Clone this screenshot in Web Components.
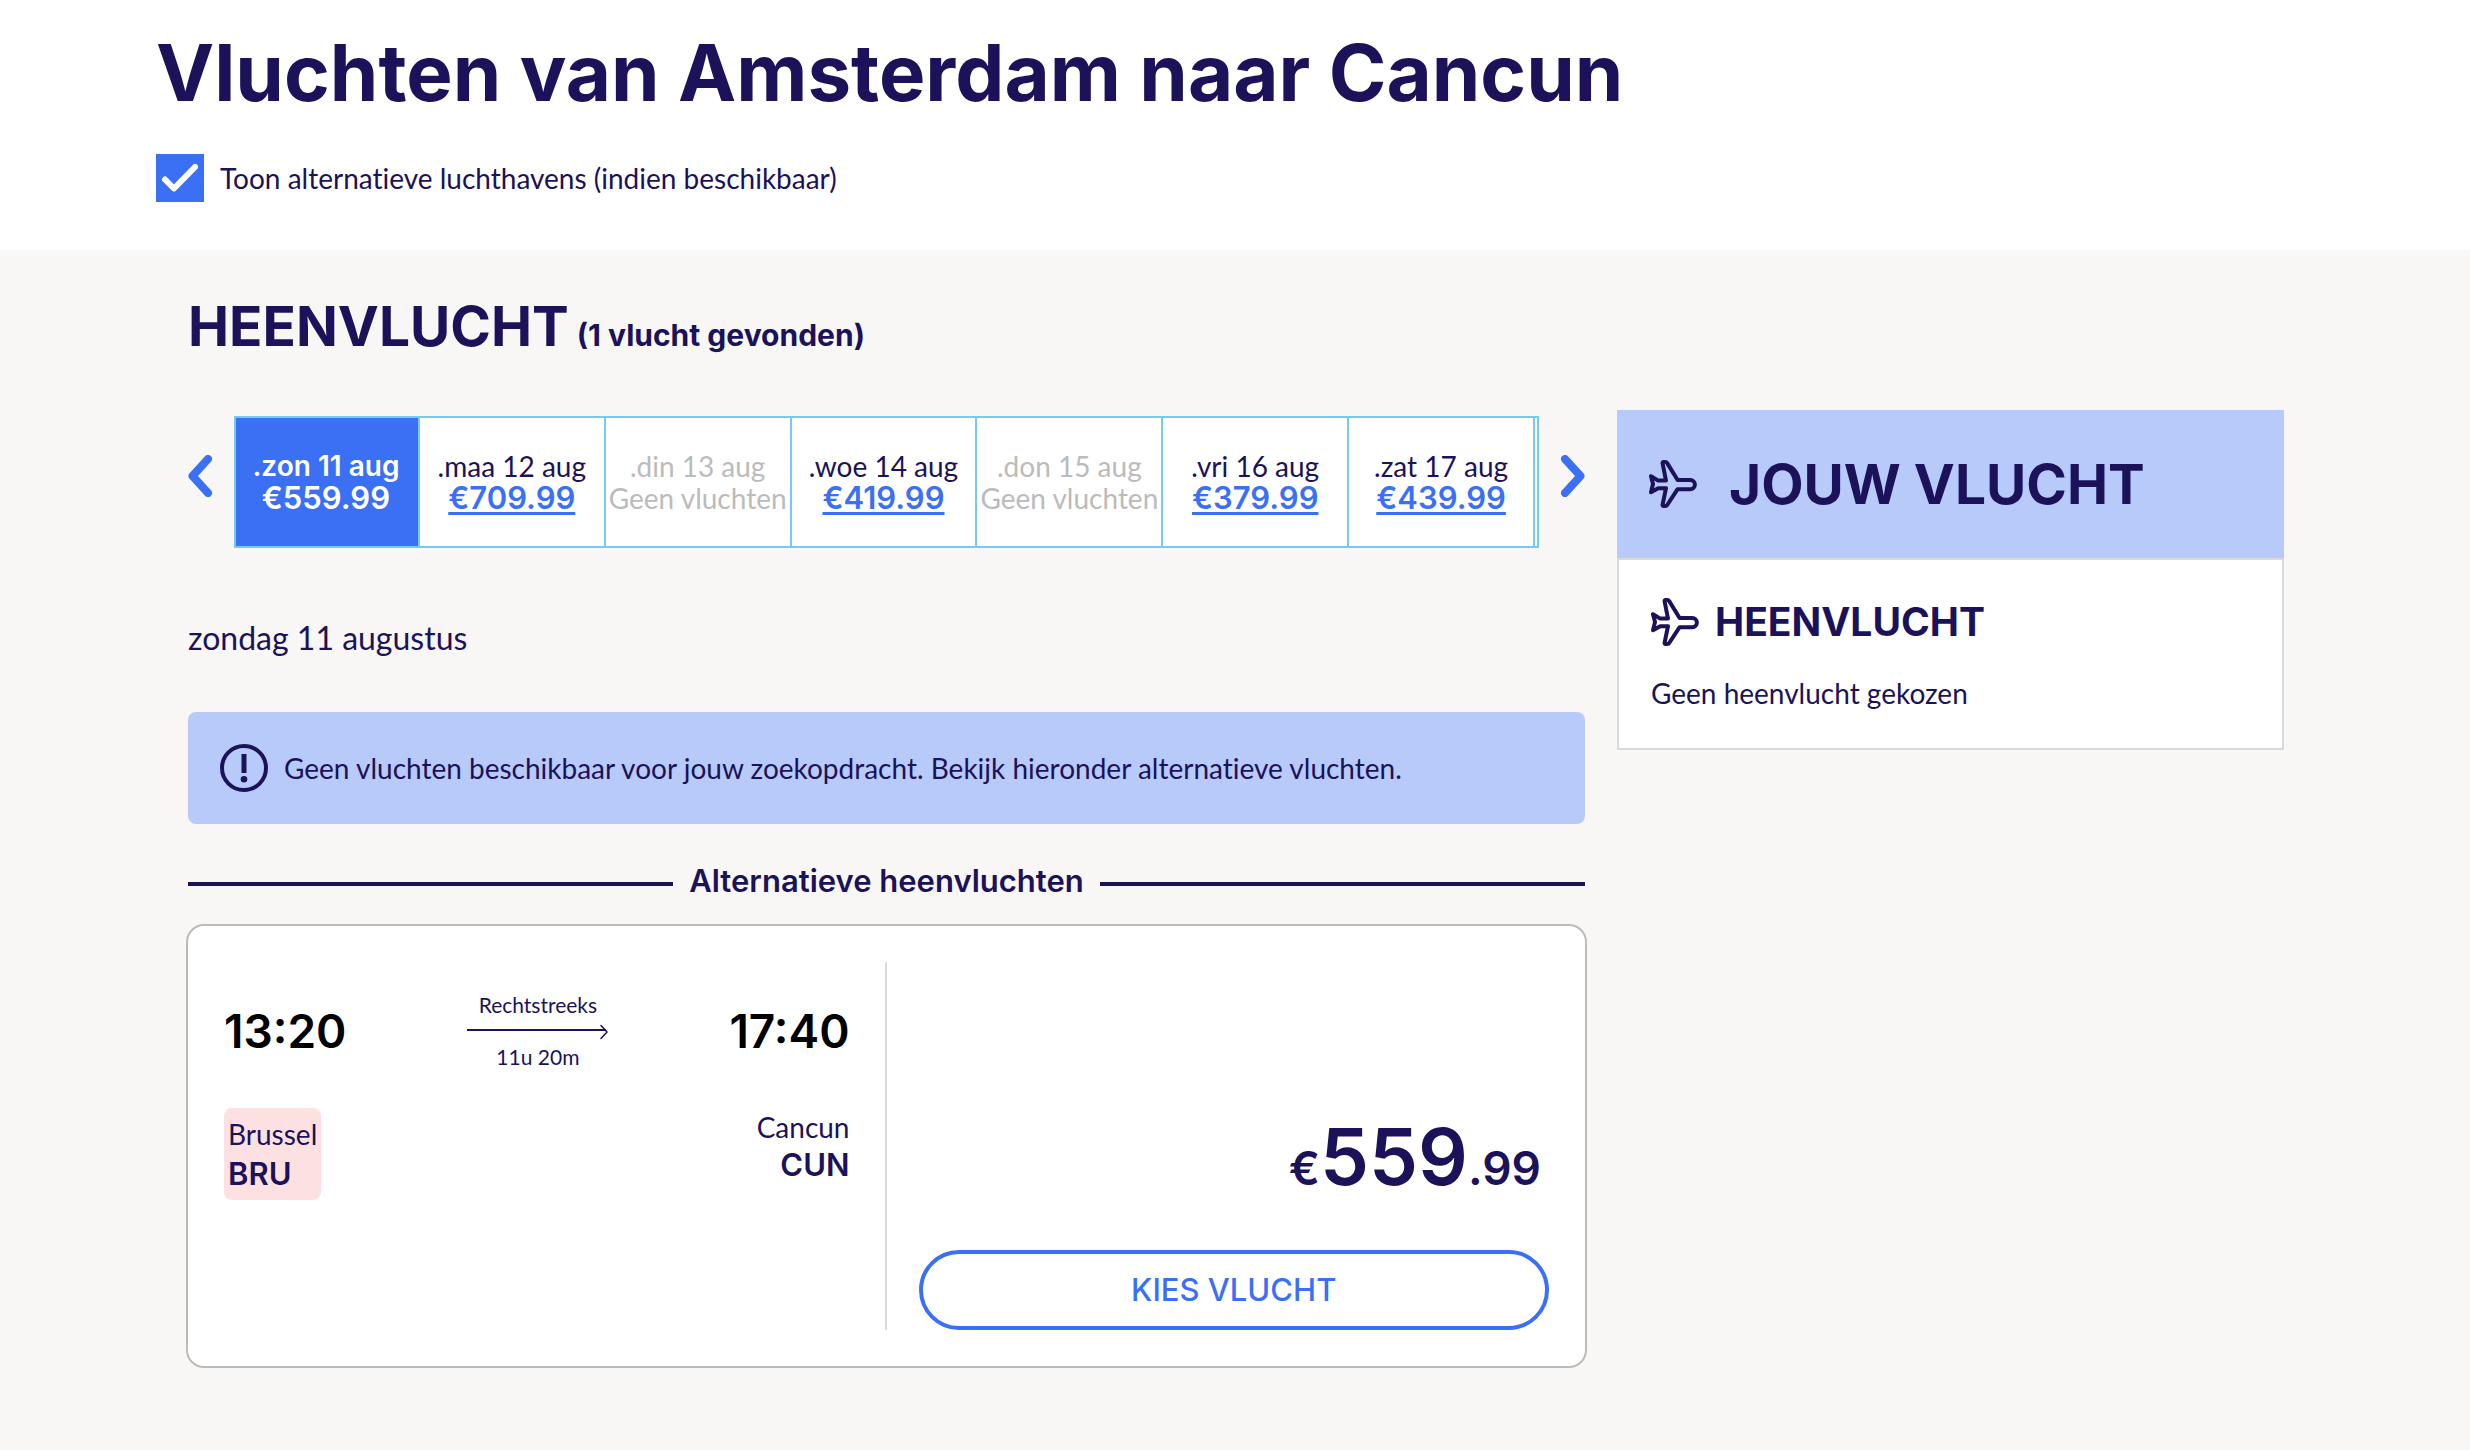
<!DOCTYPE html>
<html lang="nl">
<head>
<meta charset="utf-8">
<title>Vluchten van Amsterdam naar Cancun</title>
<style>
  :root {
    --navy: #1b1259;
    --blue: #3b70f5;
    --pale: #b8cafa;
    --sand: #f8f7f5;
    --cyan: #73cbf2;
    --muted: #bbbbbb;
    --rule: #d9d9d9;
    --head: Inter, "Liberation Sans", sans-serif;
    --text: Lato, "Liberation Sans", sans-serif;
  }
  html { background: var(--sand); }
  body { margin: 0; color: var(--navy); font: 400 28px/40px var(--text); }
</style>
</head>
<body>
<flight-page></flight-page>

<script>
const define = (name, html, setup) => {
  const template = document.createElement('template');
  template.innerHTML = '<style>*{box-sizing:border-box}h1,h2,h3,p{margin:0;padding:0}:host{display:block;font-variant-ligatures:none}svg{display:block;flex:none;fill:none;stroke:currentColor;stroke-linecap:round;stroke-linejoin:round}</style>' + html;
  customElements.define(name, class extends HTMLElement {
    connectedCallback() {
      if (this.shadowRoot) return;
      this.attachShadow({ mode: 'open' }).append(template.content.cloneNode(true));
      if (setup) setup(this, this.shadowRoot);
    }
  });
};

define('plane-icon', `
  <svg width="48" height="48" viewBox="0 0 48 48" stroke-width="4" aria-hidden="true">
    <path d="M14.6 2h1.6q1.4 0 2 1.1L28.6 20H41.300a4.600 4.600 0 0 1 0 9.200H28.600L18.200 45q-.6 1-2 1h-1.600q-1.200 0-1-1.400L17 28.200H9.200L2 32.200 4 24 2 16.200 9.200 20.600H17L13.600 3.400Q13.400 2 14.600 2Z"/>
  </svg>`);

define('check-option', `
  <style>
    label { display: flex; align-items: center; gap: 16px; }
    .box { display: grid; flex: none; }
    input, svg { grid-area: 1 / 1; width: 48px; height: 48px; margin: 0; }
    input { appearance: none; border: 2px solid var(--blue); background: #fff; }
    input:checked { background: var(--blue); }
    svg { color: #fff; pointer-events: none; }
  </style>
  <label>
    <span class="box">
      <input type="checkbox" checked>
      <svg viewBox="0 0 48 48" stroke-width="6" aria-hidden="true"><path d="M9 25.500 18 34.500 39 13"/></svg>
    </span>
    <slot></slot>
  </label>`);

define('page-header', `
  <style>
    :host { background: #fff; padding: 25px 156px 48px; }
    h1 { font: 700 78px/96px var(--head); margin-bottom: 33px; }
  </style>
  <h1><slot></slot></h1>
  <check-option>Toon alternatieve luchthavens (indien beschikbaar)</check-option>`);

define('day-cell', `
  <style>
    :host { flex: 1 1 0; min-width: 0; border-right: 2px solid var(--cyan); background: #fff; }
    a { display: flex; flex-direction: column; justify-content: center; height: 100%; text-align: center; white-space: nowrap; line-height: 32px; color: var(--navy); text-decoration: none; }
    .price { font-family: var(--head); font-size: 31px; font-weight: 600; color: var(--blue); text-decoration: underline 3px; text-underline-offset: 3px; text-decoration-skip-ink: none; }
    :host([selected]) { background: var(--blue); box-shadow: inset 2px 0 0 var(--cyan); }
    :host([selected]) a { color: #fff; font-family: var(--head); font-weight: 600; }
    :host([selected]) .price { color: #fff; text-decoration: none; }
    :host([empty]) a { color: var(--muted); }
  </style>
  <a><span class="day"></span><span class="value"></span></a>`,
  (el, root) => {
    root.querySelector('.day').textContent = el.getAttribute('day');
    const value = root.querySelector('.value');
    const price = el.getAttribute('price');
    value.textContent = price || 'Geen vluchten';
    if (price) {
      value.classList.add('price');
      root.querySelector('a').href = '#';
    }
  });

define('day-strip', `
  <style>
    :host { display: flex; align-items: center; gap: 22px; }
    button { flex: none; padding: 0 0 12px; border: 0; background: none; color: var(--blue); cursor: pointer; }
    .days { flex: 1; min-width: 0; display: flex; height: 132px; border: 2px solid var(--cyan); padding-right: 2px; background: #fff; }
    day-cell:first-child { margin-left: -2px; }
  </style>
  <button type="button" aria-label="Vorige dagen"><svg width="24" height="42" viewBox="0 0 24 42" stroke-width="8"><path d="M20 4 4.500 21 20 38"/></svg></button>
  <div class="days">
    <day-cell day=".zon 11 aug" price="€559.99" selected></day-cell>
    <day-cell day=".maa 12 aug" price="€709.99"></day-cell>
    <day-cell day=".din 13 aug" empty></day-cell>
    <day-cell day=".woe 14 aug" price="€419.99"></day-cell>
    <day-cell day=".don 15 aug" empty></day-cell>
    <day-cell day=".vri 16 aug" price="€379.99"></day-cell>
    <day-cell day=".zat 17 aug" price="€439.99"></day-cell>
  </div>
  <button type="button" aria-label="Volgende dagen"><svg width="24" height="42" viewBox="0 0 24 42" stroke-width="8"><path d="M4 4 19.500 21 4 38"/></svg></button>`);

define('info-alert', `
  <style>
    :host { display: flex; align-items: center; gap: 16px; padding: 32px; border-radius: 8px; background: var(--pale); }
  </style>
  <svg width="48" height="48" viewBox="0 0 48 48" stroke-width="4" aria-hidden="true">
    <circle cx="24" cy="24" r="22"/>
    <path d="M24 10V29" stroke-width="5" stroke-linecap="butt"/>
    <circle cx="24" cy="35.300" r="3.300" fill="currentColor" stroke="none"/>
  </svg>
  <p><slot></slot></p>`);

define('line-heading', `
  <style>
    :host { display: flex; align-items: center; gap: 16px; }
    :host::before, :host::after { content: ""; flex: 1; height: 4px; margin-top: 6px; background: var(--navy); }
    h3 { font: 600 31px/40px var(--head); }
  </style>
  <h3><slot></slot></h3>`);

define('flight-card', `
  <style>
    :host { display: grid; grid-template-columns: 1fr 1fr; min-height: 444px; margin: 0 -2px; padding: 36px; border: 2px solid var(--muted); border-radius: 18px; background: #fff; }
    .route { padding: 29px 35px 0 0; border-right: 2px solid var(--rule); }
    .times, .places { display: flex; justify-content: space-between; }
    .times { align-items: center; margin-bottom: 37px; }
    time { font: 600 46px/56px var(--head); color: #000; }
    .leg { display: flex; flex-direction: column; align-items: center; font-size: 21px; line-height: 28px; }
    .places { align-items: flex-start; line-height: 38px; }
    .code { display: block; font: 600 31px/38px var(--head); }
    .to { text-align: right; }
    .from { padding: 6px 4px; border-radius: 8px; background: #fde1e2; line-height: 40px; }
    .from .code { line-height: 40px; }
    .offer { display: flex; flex-direction: column; justify-content: flex-end; gap: 48px; padding-left: 32px; }
    .price { padding-right: 8px; text-align: right; font: 600 78px/90px var(--head); }
    .price small { font-size: 46px; line-height: 1; }
    button { width: 100%; height: 80px; border: 4px solid var(--blue); border-radius: 40px; background: #fff; color: var(--blue); font: 500 31px/40px var(--head); cursor: pointer; }
  </style>
  <div class="route">
    <div class="times">
      <time>13:20</time>
      <div class="leg">
        <span>Rechtstreeks</span>
        <svg width="141" height="24" viewBox="0 0 141 24" stroke-width="2" aria-hidden="true"><path d="M0 11H139" stroke-linecap="butt"/><path d="M134 6.500 140 13 134 19.500" stroke-width="1.500"/></svg>
        <span>11u 20m</span>
      </div>
      <time>17:40</time>
    </div>
    <div class="places">
      <div class="from">Brussel<span class="code">BRU</span></div>
      <div class="to">Cancun<span class="code">CUN</span></div>
    </div>
  </div>
  <div class="offer">
    <div class="price"><small>€</small>559<small>.99</small></div>
    <button type="button">KIES VLUCHT</button>
  </div>`);

define('flight-summary', `
  <style>
    .head { display: flex; align-items: center; gap: 32px; min-height: 148px; padding: 0 32px; background: var(--pale); }
    h2 { font: 700 55px/64px var(--head); }
    .body { padding: 38px 32px 35px; border: 2px solid var(--rule); background: #fff; }
    .title { display: flex; align-items: center; gap: 16px; margin-bottom: 27px; }
    h3 { font: 700 39px/48px var(--head); }
  </style>
  <div class="head"><plane-icon></plane-icon><h2>JOUW VLUCHT</h2></div>
  <div class="body">
    <div class="title"><plane-icon></plane-icon><h3>HEENVLUCHT</h3></div>
    <p>Geen heenvlucht gekozen</p>
  </div>`);

define('flight-page', `
  <style>
    main { padding: 44px 186px 80px 188px; }
    h2 { display: flex; align-items: baseline; gap: 8px; font: 700 55px/64px var(--head); margin-bottom: 52px; }
    h2 small { font-size: 30px; line-height: 40px; }
    .columns { display: grid; grid-template-columns: 1397fr 667fr; gap: 32px; align-items: start; }
    day-strip { margin-top: 6px; }
    .date { font-size: 32px; margin: 70px 0 54px; }
    line-heading { margin: 37px 0 23px; }
  </style>
  <page-header>Vluchten van Amsterdam naar Cancun</page-header>
  <main>
    <h2>HEENVLUCHT <small>(1 vlucht gevonden)</small></h2>
    <div class="columns">
      <section>
        <day-strip></day-strip>
        <p class="date">zondag 11 augustus</p>
        <info-alert>Geen vluchten beschikbaar voor jouw zoekopdracht. Bekijk hieronder alternatieve vluchten.</info-alert>
        <line-heading>Alternatieve heenvluchten</line-heading>
        <flight-card></flight-card>
      </section>
      <flight-summary></flight-summary>
    </div>
  </main>`);
</script>
</body>
</html>
